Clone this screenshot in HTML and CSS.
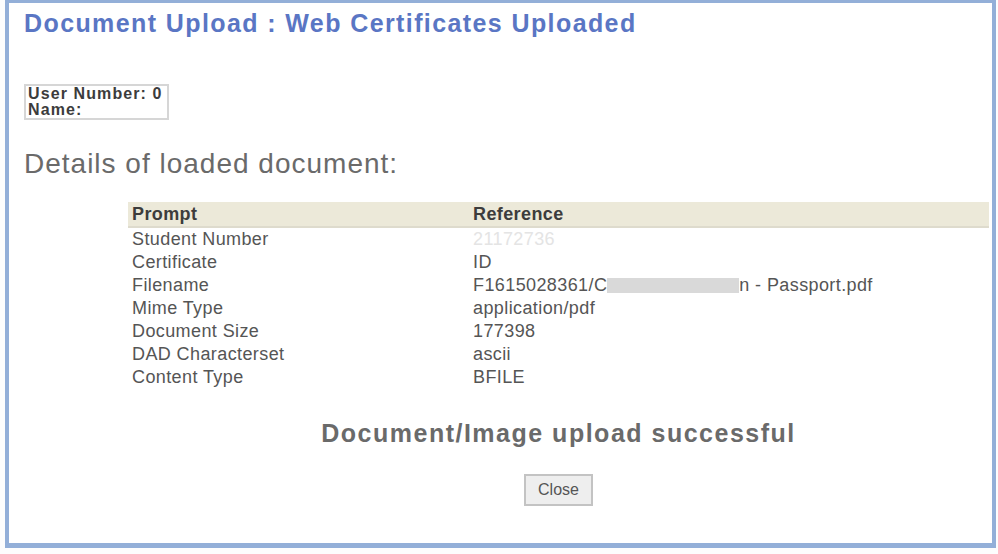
FILE: index.html
```html
<!DOCTYPE html>
<html lang="en">
<head>
    <meta charset="UTF-8">
    <title>Document Upload : Web Certificates Uploaded</title>
    <link rel="stylesheet" href="styles.css">
</head>
<body>
    <div class="frame">
        <h1 class="page-title">Document Upload : Web Certificates Uploaded</h1>

        <div class="user-box">
            <div>User Number: 0</div>
            <div>Name:</div>
        </div>

        <h2 class="section-title">Details of loaded document:</h2>

        <div class="details">
            <table class="doc-table">
                <thead>
                    <tr>
                        <th class="col-prompt">Prompt</th>
                        <th>Reference</th>
                    </tr>
                </thead>
                <tbody>
                    <tr><td>Student Number</td><td><span class="blurred">21172736</span></td></tr>
                    <tr><td>Certificate</td><td>ID</td></tr>
                    <tr><td>Filename</td><td>F1615028361/C<span class="redacted"></span>n - Passport.pdf</td></tr>
                    <tr><td>Mime Type</td><td>application/pdf</td></tr>
                    <tr><td>Document Size</td><td>177398</td></tr>
                    <tr><td>DAD Characterset</td><td>ascii</td></tr>
                    <tr><td>Content Type</td><td>BFILE</td></tr>
                </tbody>
            </table>

            <p class="success">Document/Image upload successful</p>

            <div class="actions">
                <button class="close-btn">Close</button>
            </div>
        </div>
    </div>
</body>
</html>
```

FILE: styles.css
```css
body {
    margin: 0;
    background-color: #fdfdfd;
    font-family: 'Liberation Sans', Arial, sans-serif;
}

.frame {
    box-sizing: border-box;
    width: 991px;
    height: 548px;
    margin-left: 5px;
    border: 3px solid #93afd8;
    border-left-width: 4px;
    border-right-width: 4px;
    border-bottom-width: 5px;
    background-color: #ffffff;
    padding: 6px 0 0 15px;
}

.page-title {
    margin: 0;
    font-size: 25px;
    font-weight: bold;
    color: #5a76c4;
    letter-spacing: 1.4px;
}

.user-box {
    display: inline-block;
    margin-top: 46px;
    padding: 0 4px 0 2px;
    border: 2px solid #d6d6d6;
    font-size: 16px;
    font-weight: bold;
    line-height: 16px;
    letter-spacing: 1.1px;
    color: #3c3c3c;
}

.section-title {
    margin: 28px 0 0 0;
    font-size: 28px;
    font-weight: normal;
    letter-spacing: 1px;
    color: #6a6a6a;
}

.details {
    margin: 22px 0 0 104px;
    width: 861px;
}

.doc-table {
    width: 100%;
    border-collapse: collapse;
    font-size: 18px;
    letter-spacing: 0.4px;
    color: #555555;
}

.doc-table th {
    text-align: left;
    font-weight: bold;
    color: #3c3c3c;
    background-color: #ece9d9;
    border-bottom: 2px solid #dedbcd;
    padding: 1px 4px;
    height: 22px;
}

.col-prompt {
    width: 333px;
}

.doc-table td {
    padding: 0 4px;
    height: 23px;
    line-height: 23px;
}

.blurred {
    color: #e4e4e4;
}

.redacted {
    display: inline-block;
    width: 132px;
    height: 15px;
    vertical-align: -2px;
    background-color: #d9d9d9;
}

.success {
    margin: 30px 0 0 0;
    text-align: center;
    font-size: 25px;
    font-weight: bold;
    letter-spacing: 1.5px;
    color: #6a6a6a;
}

.actions {
    margin-top: 26px;
    text-align: center;
}

.close-btn {
    width: 69px;
    height: 32px;
    border: 2px solid #c3c3c3;
    background-color: #eeeeee;
    font-family: 'Liberation Sans', Arial, sans-serif;
    font-size: 16px;
    color: #555555;
    padding: 0;
}
```
